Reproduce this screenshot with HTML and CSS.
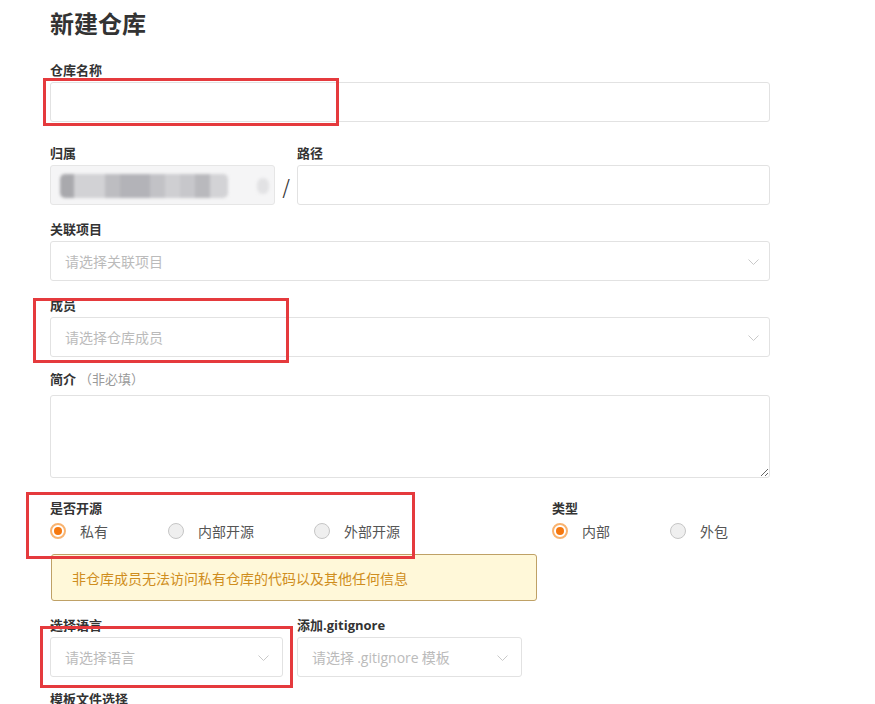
FILE: index.html
```html
<!DOCTYPE html>
<html lang="zh-CN">
<head>
<meta charset="utf-8">
<title>新建仓库</title>
<link rel="stylesheet" href="styles.css">
</head>
<body>
<div class="page">
  <h1 class="title">新建仓库</h1>

  <div class="group g-name">
    <div class="label">仓库名称</div>
    <div class="input"></div>
  </div>

  <div class="group owner-grid">
    <div class="label">归属</div>
    <div></div>
    <div class="label">路径</div>
    <div class="input owner"><div class="blur"></div><div class="blur-dot"></div></div>
    <div class="slash">/</div>
    <div class="input"></div>
  </div>

  <div class="group">
    <div class="label">关联项目</div>
    <div class="input select"><span class="ph">请选择关联项目</span><svg class="chev" width="11" height="6" viewBox="0 0 11 6"><polyline points="0.5,0.5 5.5,5.5 10.5,0.5" fill="none" stroke="#c9c9c9" stroke-width="1"/></svg></div>
  </div>

  <div class="group g-member">
    <div class="label">成员</div>
    <div class="input select"><span class="ph">请选择仓库成员</span><svg class="chev" width="11" height="6" viewBox="0 0 11 6"><polyline points="0.5,0.5 5.5,5.5 10.5,0.5" fill="none" stroke="#c9c9c9" stroke-width="1"/></svg></div>
  </div>

  <div class="group g-desc">
    <div class="label label-desc">简介 <span class="opt">（非必填）</span></div>
    <textarea class="textarea"></textarea>
  </div>

  <div class="radio-row">
    <div class="radio-col left">
      <div class="label">是否开源</div>
      <div class="radios">
        <span class="radio on"></span><span class="rtext">私有</span>
        <span class="radio"></span><span class="rtext">内部开源</span>
        <span class="radio"></span><span class="rtext">外部开源</span>
      </div>
    </div>
    <div class="radio-col right">
      <div class="label">类型</div>
      <div class="radios">
        <span class="radio on"></span><span class="rtext">内部</span>
        <span class="radio"></span><span class="rtext">外包</span>
      </div>
    </div>
  </div>

  <div class="alert">非仓库成员无法访问私有仓库的代码以及其他任何信息</div>

  <div class="group lang-grid">
    <div class="label">选择语言</div>
    <div class="label">添加<span class="latin">.gitignore</span></div>
    <div class="input select"><span class="ph">请选择语言</span><svg class="chev" width="11" height="6" viewBox="0 0 11 6"><polyline points="0.5,0.5 5.5,5.5 10.5,0.5" fill="none" stroke="#c9c9c9" stroke-width="1"/></svg></div>
    <div class="input select"><span class="ph">请选择 <span class="latin-n">.gitignore</span> 模板</span><svg class="chev" width="11" height="6" viewBox="0 0 11 6"><polyline points="0.5,0.5 5.5,5.5 10.5,0.5" fill="none" stroke="#c9c9c9" stroke-width="1"/></svg></div>
  </div>

  <div class="group">
    <div class="label">模板文件选择</div>
  </div>

  <div class="mark m1"></div>
  <div class="mark m2"></div>
  <div class="mark m3"></div>
  <div class="mark m4"></div>
</div>
</body>
</html>
```

FILE: styles.css
```css
* { box-sizing: border-box; }
html, body { margin: 0; background: #fff; }
body {
  font-family: "Noto Sans CJK SC", "Noto Sans", sans-serif;
  color: #333;
  overflow: hidden;
  height: 704px;
}
.page {
  position: relative;
  width: 770px;
  padding: 7px 0 0 50px;
}
.title {
  margin: 0 0 21px;
  font-size: 24px;
  line-height: 32px;
  font-weight: 700;
  color: #333;
}
.group { margin-bottom: 14px; }
.g-name { margin-bottom: 21px; }
.g-member { margin-bottom: 12px; }
.g-desc { margin-bottom: 20px; }
.label {
  font-size: 13px;
  line-height: 20px;
  font-weight: 700;
  color: #333;
  margin-bottom: 2px;
  white-space: nowrap;
}
.label-desc { margin-bottom: 6px; }
.opt { font-weight: 400; color: #999; }
.latin { font-family: "Open Sans", "Liberation Sans", sans-serif; font-weight: 700; }
.latin-n { font-family: "Open Sans", "Liberation Sans", sans-serif; }
.input {
  position: relative;
  height: 40px;
  border: 1px solid #e2e2e2;
  border-radius: 3px;
  background: #fff;
}
.select {
  display: flex;
  align-items: center;
  padding-left: 14px;
}
.ph { font-size: 14px; color: #bbb; white-space: nowrap; }
.chev { position: absolute; right: 10px; top: 17px; }
.owner-grid {
  display: grid;
  grid-template-columns: 225px 22px 1fr;
}
.owner { background: #f5f5f6; border-color: #e6e6e6; }
.blur {
  position: absolute;
  left: 9px; top: 8px;
  width: 168px; height: 24px;
  border-radius: 5px;
  background: linear-gradient(90deg,
    #a9a9ad 0, #a9a9ad 14px,
    #d2d2d5 14px, #d2d2d5 45px,
    #bdbdc1 45px, #bdbdc1 60px,
    #b3b3b8 60px, #b3b3b8 90px,
    #c2c2c6 90px, #c2c2c6 105px,
    #cfcfd2 105px, #cfcfd2 120px,
    #c7c7cb 120px, #c7c7cb 135px,
    #b9b9bd 135px, #b9b9bd 150px,
    #d3d3d6 150px, #d3d3d6 168px);
  filter: blur(1.5px);
}
.blur-dot {
  position: absolute;
  left: 206px; top: 12px;
  width: 12px; height: 16px;
  border-radius: 6px;
  background: #e2e2e4;
  filter: blur(1.5px);
}
.slash {
  height: 40px;
  display: flex;
  align-items: center;
  justify-content: center;
  padding-top: 6px;
  font-size: 23px;
  line-height: 1;
  font-weight: 300;
  color: #333;
  font-family: "DejaVu Sans", sans-serif;
}
.textarea {
  display: block;
  width: 100%;
  height: 83px;
  border: 1px solid #e2e2e2;
  border-radius: 3px;
  resize: vertical;
  margin: 0;
  font: inherit;
}
.radio-row { display: flex; }
.radio-col.left { width: 502px; flex: none; }
.radio-col.right { flex: 1; }
.radio-col .label { margin-bottom: 3px; }
.radios {
  display: flex;
  align-items: center;
  height: 20px;
  white-space: nowrap;
}
.radio {
  width: 16px; height: 16px;
  border-radius: 50%;
  border: 1px solid #c6c6c6;
  background: #efefef;
  margin-right: 14px;
  position: relative;
  flex: none;
}
.radio.on {
  border: 2px solid #f9b36f;
  background: #fff;
}
.radio.on::after {
  content: "";
  position: absolute;
  left: 2px; top: 2px;
  width: 8px; height: 8px;
  border-radius: 50%;
  background: #f5780f;
}
.rtext {
  font-size: 14px;
  color: #555;
  margin-right: 60px;
  flex: none;
}
.alert {
  margin: 13px 0 14px 1px;
  width: 486px;
  height: 47px;
  display: flex;
  align-items: center;
  padding-left: 20px;
  background: #fff8d9;
  border: 1px solid #bfa166;
  border-radius: 3px;
  font-size: 14px;
  color: #cf8d20;
}
.lang-grid {
  display: grid;
  grid-template-columns: 233px 225px;
  column-gap: 14px;
  margin-bottom: 12px;
}
.lang-grid .chev { right: 13px; }
.mark {
  position: absolute;
  border: 3px solid #e53a3d;
}
.m1 { left: 43px; top: 78px; width: 296px; height: 48px; }
.m2 { left: 33px; top: 298px; width: 256px; height: 65px; }
.m3 { left: 26px; top: 492px; width: 389px; height: 67px; }
.m4 { left: 40px; top: 626px; width: 253px; height: 62px; }
```
